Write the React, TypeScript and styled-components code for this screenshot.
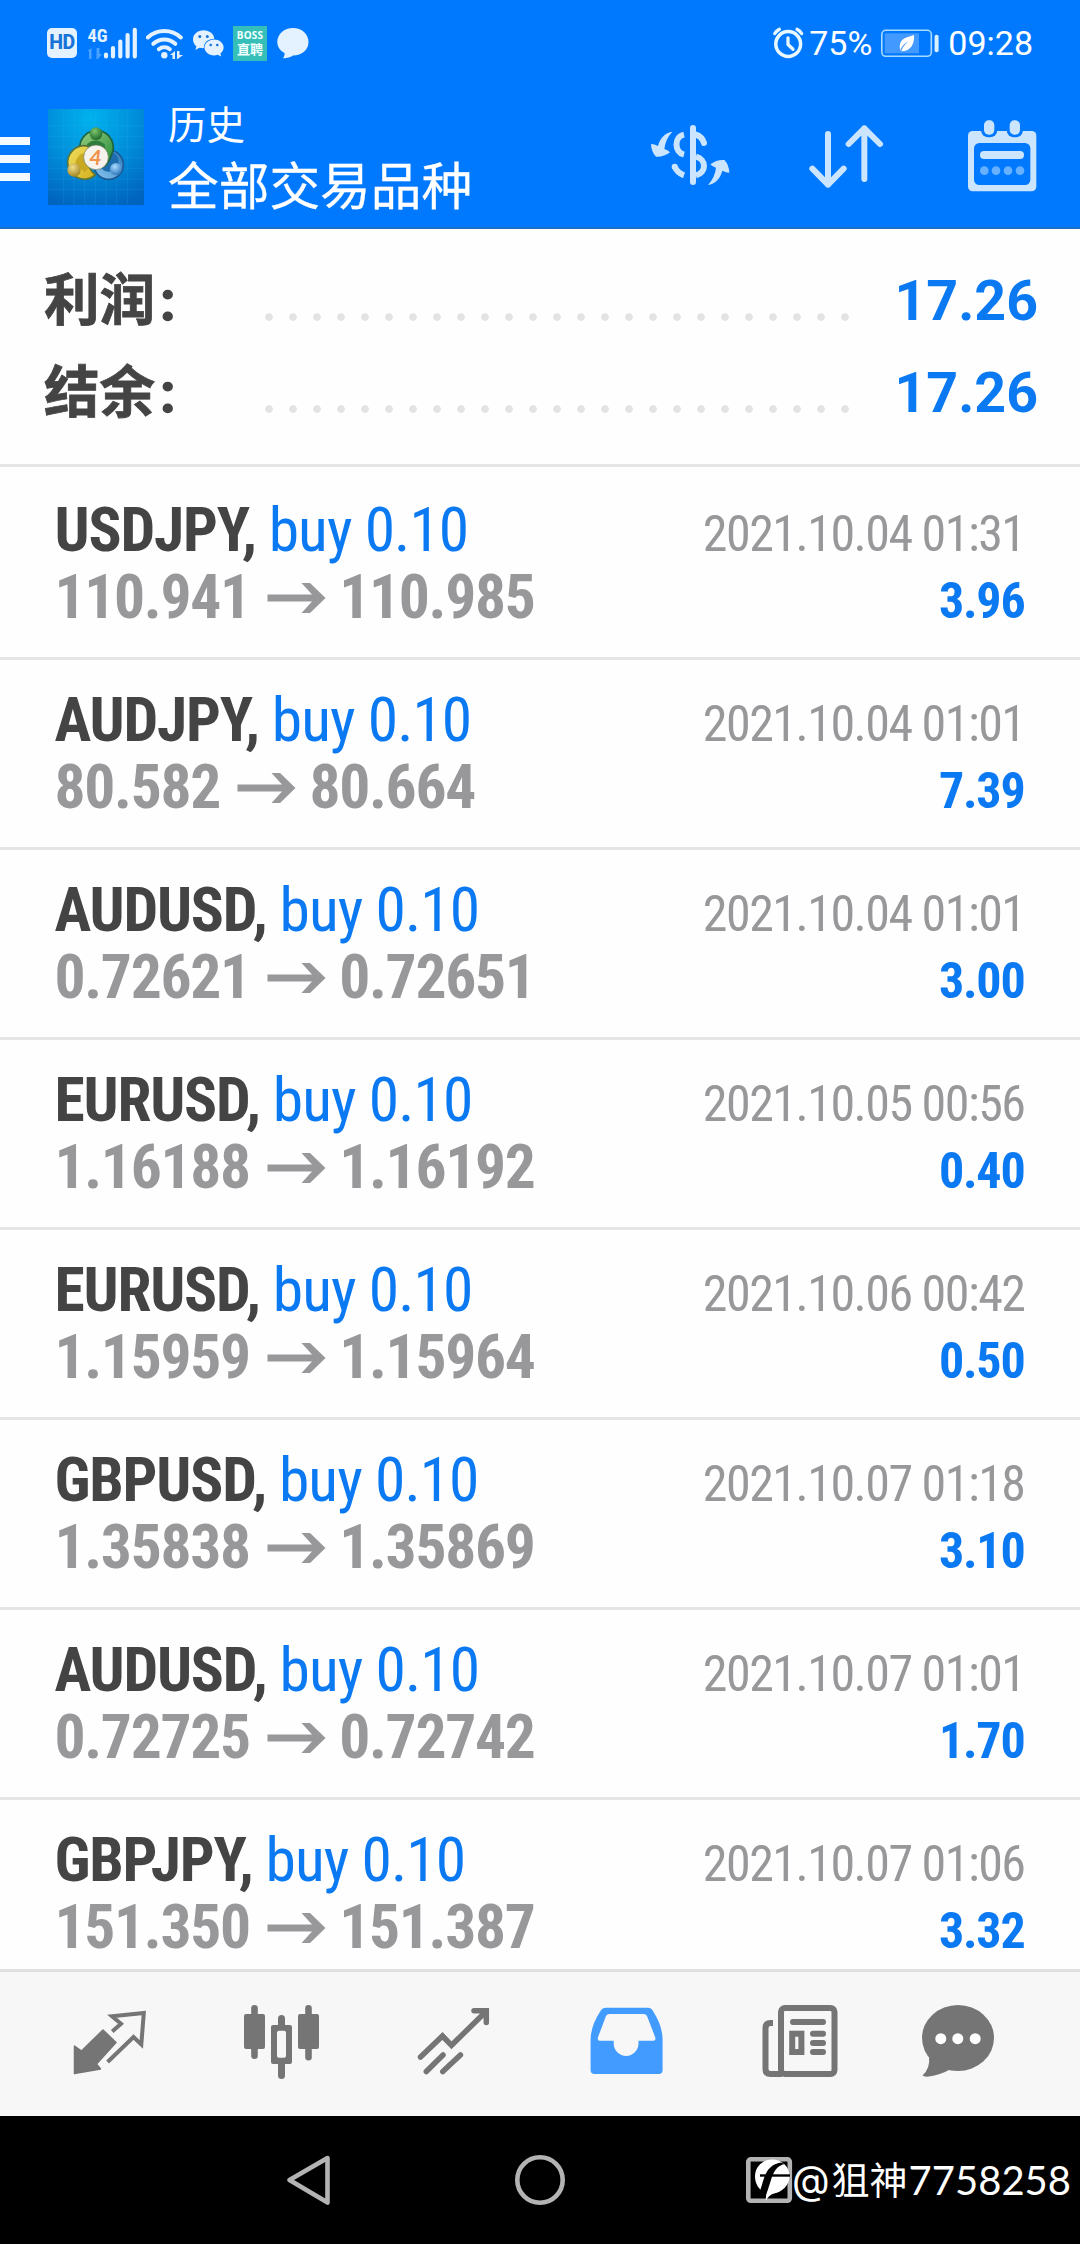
import React from 'react';
import styled, { createGlobalStyle } from 'styled-components';

const BLUE = '#0079ff';
const TEXT_BLUE = '#0b79f2';
const ICON = '#cce5ff';
const GREY = '#757575';
const STATUS = '#e4f1ff';

const GlobalStyle = createGlobalStyle`
  body { margin: 0; background: #fff; }
  *, *::before, *::after { box-sizing: border-box; }
  svg { display: block; flex: none; }
`;

const Screen = styled.div`
  position: relative;
  display: flex;
  flex-direction: column;
  width: 1080px;
  height: 2244px;
  overflow: hidden;
  background: #fefefe;
  font-family: Roboto, "Noto Sans CJK SC", sans-serif;
`;

const Header = styled.header`
  flex: none;
  height: 229px;
  background: ${BLUE};
  border-bottom: 2px solid #1c6fc4;
  color: #fff;
`;

const StatusBar = styled.div`
  display: flex;
  justify-content: space-between;
  align-items: center;
  height: 84px;
  padding: 2px 47px 0 47px;
`;

const StatusGroup = styled.div<{ $gap: number }>`
  display: flex;
  align-items: center;
  gap: ${p => p.$gap}px;
`;

const HdBadge = styled.span`
  display: flex;
  align-items: center;
  justify-content: center;
  width: 30px;
  height: 30px;
  border-radius: 5px;
  background: ${STATUS};
  color: #1873d8;
  font: 800 19.5px/30px Roboto, sans-serif;
  letter-spacing: -0.5px;
`;

const BossBadge = styled.span`
  display: flex;
  flex-direction: column;
  align-items: center;
  justify-content: center;
  width: 34px;
  height: 35px;
  background: #36bfb8;
  color: #f0ffff;
`;

const BossLatin = styled.span`
  font: 700 10px/11px "Noto Sans", sans-serif;
  letter-spacing: 0.2px;
`;

const BossHan = styled.span`
  font: 700 13px/15px "Noto Sans CJK SC", sans-serif;
`;

const StatusText = styled.span<{ $ml?: number; $mr?: number }>`
  margin: 0 ${p => p.$mr || 0}px 0 ${p => p.$ml || 0}px;
  font-size: 34px;
  line-height: 40px;
`;

const AppBar = styled.div`
  display: flex;
  align-items: flex-start;
  height: 143px;
`;

const Menu = styled.div`
  display: flex;
  flex-direction: column;
  gap: 10px;
  width: 30px;
  margin: 53px 18px 0 0;
`;

const MenuBar = styled.i`
  height: 8px;
  background: #f4faff;
`;

const LogoBox = styled.div`
  margin-top: 25px;
`;

const Titles = styled.div`
  flex: 1;
  display: flex;
  flex-direction: column;
  gap: 9px;
  margin: 16px 0 0 24px;
  font-family: "Noto Sans CJK SC", sans-serif;
`;

const Caption = styled.span`
  font-size: 38.5px;
  line-height: 44px;
`;

const Title = styled.span`
  font-size: 50.7px;
  line-height: 60px;
  -webkit-text-stroke: 0.3px #fff;
`;

const Summary = styled.section`
  flex: none;
  height: 238px;
  padding: 27px 42px 0 44px;
  border-bottom: 3px solid #e5e5e5;
`;

const SummaryRow = styled.div`
  display: flex;
  align-items: baseline;
  height: 92px;
  line-height: 92px;
  font-size: 55.5px;
  font-weight: 700;
`;

const SummaryLabel = styled.span`
  width: 213px;
  color: #444;
  -webkit-text-stroke: 0.8px #444;
`;

const Colon = styled.span`
  margin-left: 5px;
  -webkit-text-stroke: 1.5px #444;
`;

const Leader = styled.i`
  align-self: flex-start;
  width: 600px;
  height: 8px;
  margin-top: 57px;
  background: radial-gradient(circle, #e3e3e3 3.4px, transparent 4.2px) 0 0 / 24px 8px;
`;

const SummaryValue = styled.span`
  flex: 1;
  text-align: right;
  color: ${TEXT_BLUE};
`;

const DealList = styled.main`
  flex: 1;
  min-height: 0;
  overflow: hidden;
  font-family: "Roboto Condensed", Roboto, sans-serif;
`;

const Deal = styled.article`
  height: 190px;
  padding: 26.5px 55.5px 0 54.5px;
  border-top: 3px solid #e5e5e5;
  &:first-child { border-top-color: transparent; }
`;

const DealLine = styled.div`
  display: flex;
  justify-content: space-between;
  align-items: baseline;
  height: 67px;
  line-height: 67px;
  white-space: pre;
`;

const Symbol = styled.span`
  font-size: 61.5px;
  font-weight: 700;
  letter-spacing: -1.2px;
  color: #444;
`;

const Side = styled.span`
  font-weight: 400;
  letter-spacing: -0.95px;
  color: ${TEXT_BLUE};
`;

const Prices = styled.span`
  display: flex;
  align-items: baseline;
  font-size: 61.5px;
  font-weight: 700;
  letter-spacing: -1.3px;
  color: #98989b;
`;

const ArrowBox = styled.span`
  width: 60px;
  margin: 0 13.5px 0 16px;
`;

const Time = styled.span`
  font-size: 50px;
  letter-spacing: -1.5px;
  color: #98989b;
`;

const Profit = styled.span`
  font-size: 50px;
  font-weight: 700;
  letter-spacing: -1.2px;
  color: ${TEXT_BLUE};
`;

const TabBar = styled.nav`
  flex: none;
  display: flex;
  height: 147px;
  padding-left: 24px;
  border-top: 3px solid #e0e0e0;
  background: #f7f7f7;
`;

const Tab = styled.div`
  display: flex;
  justify-content: center;
  width: 172px;
`;

const SystemNav = styled.div`
  flex: none;
  display: flex;
  justify-content: center;
  height: 128px;
  background: #000;
`;

const NavKey = styled.div`
  display: flex;
  justify-content: center;
  width: 230px;
`;

const Watermark = styled.div`
  position: absolute;
  right: 9px;
  bottom: 34px;
  display: flex;
  align-items: center;
  height: 60px;
  color: #fff;
`;

const AtSign = styled.span`
  margin: 0 2px 0 2px;
  font: 400 39px/60px Inter, sans-serif;
`;

const Handle = styled.span`
  margin-top: -4px;
  font: 400 38px/60px "Noto Sans CJK SC", sans-serif;
`;

const HandleDigits = styled.span`
  margin-left: 1px;
  font: 400 40px/60px Lato, sans-serif;
`;

const Signal = () => (
  <svg width="50" height="40" viewBox="88 22 50 40">
    <text x="88.500" y="41" fontFamily="Roboto Condensed" fontWeight="700" fontSize="18.500" fill={STATUS}>4G</text>
    <path d="M88 50l4.500-3v11h-2.500v-8zM99 58l4-5h-2.500v-6h-3v11z" fill="#4aa2ff" />
    <g stroke={STATUS} strokeWidth="4.200" strokeLinecap="round">
      <path d="M107 53.500V55.500M114 47V55.500M121.300 40.500V55.500M128.600 34V55.500M135.800 28.800V55.500" />
    </g>
  </svg>
);

const Wifi = () => (
  <svg width="37" height="32" viewBox="147 26 37 32">
    <g fill="none" stroke={STATUS} strokeWidth="4" strokeLinecap="round">
      <path d="M148.800 36.500A24.500 24.500 0 0 1 181.800 36.500" />
      <path d="M154.300 42.800A16 16 0 0 1 176.300 42.800" />
      <path d="M159.800 48.300A8.500 8.500 0 0 1 170.800 48.300" />
    </g>
    <circle cx="165.300" cy="54.300" r="3.200" fill={STATUS} />
    <path d="M171 54l5-4v8h-2.500v-4zM178 50h2.500v4H184l-6 4.500z" fill={STATUS} />
  </svg>
);

const WeChat = () => (
  <svg width="31" height="27" viewBox="193 30 31 27">
    <path d="M203.500 30.200c6 0 10.600 4 10.800 8.500-6 0-11 3.800-10.400 9.400-1.500.2-3 0-4.500-.4l-4 2.300 1-3.800c-2-1.600-3.400-4-3.400-6.800 0-5.100 4.700-9.200 10.500-9.200z" fill={STATUS} />
    <path d="M214 39.600c5.300 0 9.600 3.500 9.600 8 0 2.500-1.400 4.500-3.200 6l.8 3-3.500-1.800c-1.200.4-2.400.6-3.700.6-5.300 0-9.500-3.500-9.500-7.800s4.200-8 9.500-8z" fill={STATUS} />
    <g fill="#1873d8">
      <circle cx="199.800" cy="36.500" r="1.500" /><circle cx="207.300" cy="36.500" r="1.500" />
      <circle cx="210.700" cy="45" r="1.300" /><circle cx="217.300" cy="45" r="1.300" />
    </g>
  </svg>
);

const Bubble = () => (
  <svg width="32" height="31" viewBox="276.500 28 32 31">
    <path d="M292.500 28c8.800 0 15.500 6 15.500 14s-6.700 13.500-15.500 13.500c-3 2-6 2.800-10 2.700 1-1.300 1.800-3.300 1.500-5.200-4.300-2.200-7.200-6.400-7.200-11 0-8 7-14 15.700-14z" fill={STATUS} />
  </svg>
);

const Alarm = () => (
  <svg width="31" height="32" viewBox="774 26 31 32">
    <g fill="none" stroke="#e8f8ff" strokeLinecap="round">
      <circle cx="789.200" cy="43" r="12.400" strokeWidth="3.500" />
      <path d="M775.800 32.500q1.500-2.500 4.500-4.200M802.600 32.500q-1.500-2.500-4.500-4.200" strokeWidth="3.300" />
      <path d="M789 36.800V43.500L794 48.300" strokeWidth="3.300" />
    </g>
  </svg>
);

const Battery = () => (
  <svg width="58" height="29" viewBox="882 28 58 29">
    <rect x="882.800" y="29.300" width="49.500" height="26" rx="4" fill="none" stroke="#a8dcff" strokeWidth="1.600" />
    <rect x="885.700" y="32.300" width="34.300" height="20" fill="#4299ff" />
    <path d="M915 34c-6 2-14 2.500-14.300 11.500 0 1.600.4 3 .6 4.500.8-4 4-7.500 8-9.500-3.500 2.700-6 6-7 9.800 8 .2 13.700-6 12.700-16.300z" fill="#fff" />
    <rect x="935.600" y="33.700" width="4" height="17.500" rx="1.800" fill="#d9f0ff" />
  </svg>
);

const AppLogo = () => (
  <svg width="96" height="96" viewBox="0 0 288 288">
    <defs>
      <radialGradient id="bg" cx="0.45" cy="0.1" r="0.95">
        <stop offset="0" stopColor="#00b2ee" /><stop offset="0.55" stopColor="#008ad8" /><stop offset="1" stopColor="#0064be" />
      </radialGradient>
      <linearGradient id="gr" x1="0" y1="0" x2="1" y2="1">
        <stop offset="0" stopColor="#9ccf84" /><stop offset="1" stopColor="#1f8a34" />
      </linearGradient>
      <linearGradient id="ye" x1="0" y1="0" x2="1" y2="1">
        <stop offset="0" stopColor="#f0e060" /><stop offset="1" stopColor="#d3ae1c" />
      </linearGradient>
      <linearGradient id="bl" x1="1" y1="0" x2="0" y2="1">
        <stop offset="0" stopColor="#2878bc" /><stop offset="1" stopColor="#8cc8f0" />
      </linearGradient>
      <radialGradient id="gb" cx="0.4" cy="0.3" r="0.8"><stop offset="0" stopColor="#7cc46c" /><stop offset="1" stopColor="#145f24" /></radialGradient>
      <radialGradient id="yb" cx="0.4" cy="0.3" r="0.8"><stop offset="0" stopColor="#f0e08a" /><stop offset="1" stopColor="#9a7a1a" /></radialGradient>
      <radialGradient id="bb" cx="0.4" cy="0.3" r="0.8"><stop offset="0" stopColor="#a9dcff" /><stop offset="1" stopColor="#1f6cb4" /></radialGradient>
    </defs>
    <rect width="288" height="288" fill="url(#bg)" />
    <path d="M47 0V288M78 0V288M110 0V288M142 0V288M174 0V288M206 0V288M238 0V288M0 50H288M0 82H288M0 114H288M0 146H288M0 178H288M0 210H288M0 242H288" stroke="#3fc0ee" strokeOpacity="0.22" strokeWidth="2" />
    <circle cx="182" cy="167" r="44" fill="url(#bl)" stroke="#1b5c94" strokeWidth="5" />
    <circle cx="182" cy="158" r="30" fill="#1d6cae" />
    <path d="M96 120A50 50 0 1 1 190 138Q184 160 168 172L120 120Z" fill="url(#gr)" stroke="#1d6440" strokeWidth="5" />
    <path d="M118 104Q144 84 170 106L176 150L144 130L112 128Z" fill="#2f7d3c" />
    <path d="M122 112A50 50 0 1 0 142 198Q120 180 118 150Z" fill="url(#ye)" stroke="#5c7434" strokeWidth="5" strokeLinejoin="round" />
    <path d="M112 132Q84 136 82 166L110 190L124 176Z" fill="#c9a822" />
    <circle cx="144" cy="74" r="19" fill="url(#gb)" />
    <circle cx="78" cy="183" r="20" fill="url(#yb)" />
    <circle cx="204" cy="180" r="18" fill="url(#bb)" />
    <circle cx="144" cy="145" r="37" fill="#f6f2ec" stroke="#6d7f60" strokeWidth="2" />
    <text x="142" y="168" textAnchor="middle" fontFamily="Lato" fontStyle="italic" fontWeight="700" fontSize="64" fill="#f0924a">4</text>
  </svg>
);

const Currency = () => (
  <svg width="156" height="143" viewBox="36 252 468 429">
    <path d="M279 384V546" stroke={ICON} strokeWidth="18" strokeLinecap="round" />
    <g fill="none" stroke={ICON} strokeWidth="18">
      <path d="M252 404C222 410 222 456 252 464" />
      <path d="M288 404Q306 410 312 429" strokeLinecap="round" />
      <path d="M288 470C320 478 320 518 288 526" />
      <path d="M224 500Q232 519 252 526" />
    </g>
    <circle cx="224" cy="500" r="9" fill={ICON} />
    <g fill={ICON}>
      <path id="swap" d="M217 395C196 398 180 414 174 438Q163 432 153 432Q154 456 168 470Q190 472 210 457Q203 449 193 447Q196 418 217 395Z" />
      <use href="#swap" transform="rotate(180 270.500 475)" />
    </g>
  </svg>
);

const Sort = () => (
  <svg width="156" height="143" viewBox="504 252 468 429">
    <path d="M684 402V554M637 506L684 554L731 506M793 537V385M746 432L793 385L840 432" fill="none" stroke={ICON} strokeWidth="18" strokeLinecap="round" strokeLinejoin="round" />
  </svg>
);

const Calendar = () => (
  <svg width="156" height="143" viewBox="972 252 468 429">
    <rect x="1104" y="393" width="205" height="181" rx="14" fill={ICON} />
    <rect x="1122" y="429" width="169" height="126" rx="16" fill={BLUE} />
    <rect x="1143" y="352" width="49" height="60" rx="22" fill={BLUE} />
    <rect x="1220" y="352" width="49" height="60" rx="22" fill={BLUE} />
    <rect x="1152" y="361" width="31" height="43" rx="14" fill={ICON} />
    <rect x="1229" y="361" width="31" height="43" rx="14" fill={ICON} />
    <rect x="1140" y="453" width="132" height="24" rx="12" fill={ICON} />
    <g fill="#66b0ff">
      <circle cx="1153" cy="512" r="13" /><circle cx="1188" cy="512" r="13" />
      <circle cx="1224" cy="512" r="13" /><circle cx="1260" cy="512" r="13" />
    </g>
  </svg>
);

const PriceArrow = () => (
  <svg width="60" height="38" viewBox="0 0 60 38">
    <path d="M1.500 14.500H46L35.500 3H44L59.500 18L44 33H35.500L46 21.500H1.500Z" fill="#98989b" />
  </svg>
);

const tabIcons: React.ReactNode[] = [
  <g key="quotes">
    <path d="M74.500 86L81.500 91L103 70L116 82.500L96.500 104L100.500 109L74.500 113.500Z" fill={GREY} stroke={GREY} strokeWidth="1.500" strokeLinejoin="round" />
    <path d="M112.200 71.500L121 63.800L112 56.300L143.800 53L141.300 84.500L133.500 77L107.600 102" fill="none" stroke={GREY} strokeWidth="4" />
  </g>,
  <g key="chart" fill={GREY}>
    <rect x="244" y="54" width="21" height="35" rx="2" />
    <rect x="251.200" y="45" width="6.600" height="54" rx="3.300" />
    <rect x="298" y="54" width="21" height="35" rx="2" />
    <rect x="305.200" y="45" width="6.600" height="55.500" rx="3.300" />
    <rect x="278" y="55" width="7" height="64" rx="3.500" />
    <rect x="271" y="65" width="21" height="39" rx="2" />
    <rect x="277" y="70.700" width="9" height="27" rx="2" fill="#f7f7f7" />
  </g>,
  <path key="trade" d="M420.500 97L442.500 76L451.500 85.300L486 51.500M474 50.700H486.300V62.500M426.300 111.500L443 95M442.800 111.500L460.400 95" fill="none" stroke={GREY} strokeWidth="5.500" strokeLinecap="round" />,
  <path key="history" fillRule="evenodd" fill="#429bff" d="M606 47.700H648Q651 47.700 653 51Q662.600 66 662.600 80V110Q662.600 114 658.600 114H594.600Q590.600 114 590.600 110V80Q590.600 66 600.500 51Q602.500 47.700 606 47.700ZM609.500 54Q607 54 606 56L597.900 77.500Q597.300 80.700 599.500 80.700H613.700V83.500A12.400 12.500 0 0 0 638.500 83.500V80.700H653.500Q656 80.700 655.300 77.500L647 56Q646 54 643.500 54Z" />,
  <g key="news" fill="none" stroke={GREY} strokeWidth="6">
    <rect x="781" y="48" width="53.500" height="66" rx="4" />
    <path d="M773 63H770.500Q765.500 63 765.500 68V109Q765.500 114 770.500 114H782" />
    <path d="M793 62H823M813 73.800H823M813 83H823M813 92H823" strokeLinecap="round" />
    <rect x="792.200" y="73.700" width="9.200" height="18.300" />
  </g>,
  <g key="messages">
    <ellipse cx="958" cy="78" rx="36" ry="33" fill={GREY} />
    <path d="M929 97Q930.500 108 922.500 115.500Q924 117 929 116.500Q940 115 950 109.500Z" fill={GREY} />
    <circle cx="940.800" cy="78.700" r="5.500" fill="#fff" /><circle cx="957.800" cy="78.700" r="5.500" fill="#fff" /><circle cx="975.200" cy="78.700" r="5.500" fill="#fff" />
  </g>,
];

const navIcons: React.ReactNode[] = [
  <path key="back" d="M327.500 2158L289.500 2180L327.500 2202.500Z" />,
  <circle key="home" cx="540" cy="2180" r="22.700" />,
  <rect key="recent" x="748.300" y="2159.300" width="41.500" height="41.500" rx="2.500" />,
];

const WatermarkLogo = () => (
  <svg width="36" height="44" viewBox="756 2164 36 44">
    <path d="M774 2165.500c10 0 17.500 7.300 17.500 16.500 0 9.500-7.500 16-15.500 17.500-3.500.8-6.500 4-8.300 7.500l.5-8c-6.500-2-11.200-8.500-11.200-16.500 0-9.700 7.500-17 17-17z" fill="#fff" />
    <path d="M761.500 2198C766 2188 766 2171 783 2168.500L787 2170C774 2172.500 774 2186 768 2201Z" fill="#000" />
    <path d="M762 2181.500H792" fill="none" stroke="#000" strokeWidth="2.400" />
  </svg>
);

const deals = [
  ['USDJPY', '110.941', '110.985', '2021.10.04 01:31', '3.96'],
  ['AUDJPY', '80.582', '80.664', '2021.10.04 01:01', '7.39'],
  ['AUDUSD', '0.72621', '0.72651', '2021.10.04 01:01', '3.00'],
  ['EURUSD', '1.16188', '1.16192', '2021.10.05 00:56', '0.40'],
  ['EURUSD', '1.15959', '1.15964', '2021.10.06 00:42', '0.50'],
  ['GBPUSD', '1.35838', '1.35869', '2021.10.07 01:18', '3.10'],
  ['AUDUSD', '0.72725', '0.72742', '2021.10.07 01:01', '1.70'],
  ['GBPJPY', '151.350', '151.387', '2021.10.07 01:06', '3.32'],
];

export default function App() {
  return (
    <Screen>
      <GlobalStyle />
      <Header>
        <StatusBar>
          <StatusGroup $gap={9.5}>
            <HdBadge>HD</HdBadge>
            <Signal />
            <Wifi />
            <WeChat />
            <BossBadge><BossLatin>BOSS</BossLatin><BossHan>直聘</BossHan></BossBadge>
            <Bubble />
          </StatusGroup>
          <StatusGroup $gap={5}>
            <Alarm />
            <StatusText $mr={4}>75%</StatusText>
            <Battery />
            <StatusText $ml={4}>09:28</StatusText>
          </StatusGroup>
        </StatusBar>
        <AppBar>
          <Menu><MenuBar /><MenuBar /><MenuBar /></Menu>
          <LogoBox><AppLogo /></LogoBox>
          <Titles>
            <Caption>历史</Caption>
            <Title>全部交易品种</Title>
          </Titles>
          <Currency />
          <Sort />
          <Calendar />
        </AppBar>
      </Header>
      <Summary>
        {['利润', '结余'].map(label => (
          <SummaryRow key={label}>
            <SummaryLabel>{label}<Colon>:</Colon></SummaryLabel>
            <Leader />
            <SummaryValue>17.26</SummaryValue>
          </SummaryRow>
        ))}
      </Summary>
      <DealList>
        {deals.map(([symbol, open, close, time, profit]) => (
          <Deal key={symbol + time}>
            <DealLine>
              <Symbol>{symbol}, <Side>buy 0.10</Side></Symbol>
              <Time>{time}</Time>
            </DealLine>
            <DealLine>
              <Prices>{open}<ArrowBox><PriceArrow /></ArrowBox>{close}</Prices>
              <Profit>{profit}</Profit>
            </DealLine>
          </Deal>
        ))}
      </DealList>
      <TabBar>
        {tabIcons.map((icon, i) => (
          <Tab key={i}>
            <svg width="104" height="144" viewBox={`${58 + 172 * i} 12 104 144`}>{icon}</svg>
          </Tab>
        ))}
      </TabBar>
      <SystemNav>
        {navIcons.map((icon, i) => (
          <NavKey key={i}>
            <svg width="80" height="128" viewBox={`${270 + 230 * i} 2116 80 128`} fill="none" stroke="#b3b3b3" strokeWidth="4.600" strokeLinejoin="round">{icon}</svg>
          </NavKey>
        ))}
      </SystemNav>
      <Watermark>
        <WatermarkLogo />
        <AtSign>@</AtSign>
        <Handle>狙神</Handle>
        <HandleDigits>7758258</HandleDigits>
      </Watermark>
    </Screen>
  );
}
